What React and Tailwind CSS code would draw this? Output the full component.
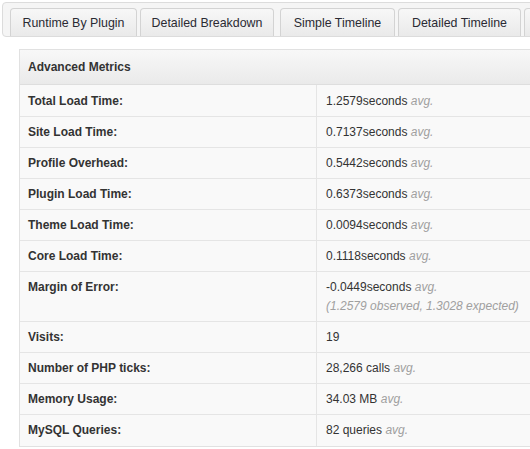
import React from 'react';

const tabs = [
  { label: 'Runtime By Plugin', w: 'w-[127px]', ml: '' },
  { label: 'Detailed Breakdown', w: 'w-[134px]', ml: 'ml-[3px]' },
  { label: 'Simple Timeline', w: 'w-[115px]', ml: 'ml-[6px]' },
  { label: 'Detailed Timeline', w: 'w-[123px]', ml: 'ml-[3px]' },
  { label: '', w: 'w-[110px]', ml: 'ml-[3px]' },
];

const rows = [
  { label: 'Total Load Time:', value: '1.2579seconds', avg: true },
  { label: 'Site Load Time:', value: '0.7137seconds', avg: true },
  { label: 'Profile Overhead:', value: '0.5442seconds', avg: true },
  { label: 'Plugin Load Time:', value: '0.6373seconds', avg: true },
  { label: 'Theme Load Time:', value: '0.0094seconds', avg: true },
  { label: 'Core Load Time:', value: '0.1118seconds', avg: true },
  { label: 'Margin of Error:', value: '-0.0449seconds', avg: true, note: '(1.2579 observed, 1.3028 expected)' },
  { label: 'Visits:', value: '19' },
  { label: 'Number of PHP ticks:', value: '28,266 calls', avg: true },
  { label: 'Memory Usage:', value: '34.03 MB', avg: true },
  { label: 'MySQL Queries:', value: '82 queries', avg: true },
];

export default function App() {
  return (
    <div className="w-[530px] h-[449px] overflow-hidden bg-white text-[#333] font-['Liberation_Sans',Arial,sans-serif]">
      {/* Tabs */}
      <div className="ml-[2px] mt-[2px] w-[560px] h-[35px] border border-[#dcdcdc] rounded-[4px] bg-[#f5f5f5] pl-[7px] pt-[5px] flex whitespace-nowrap overflow-hidden">
        {tabs.map((t, i) => (
          <div
            key={i}
            className={`${t.w} ${t.ml} shrink-0 h-[29px] flex items-center justify-center text-[12.4px] text-[#2a2a33] border border-b-0 border-[#d3d3d3] rounded-t-[4px] bg-gradient-to-b from-[#f7f7f7] to-[#e9e9e9]`}
          >
            {t.label}
          </div>
        ))}
      </div>

      {/* Metrics table */}
      <div className="ml-[19px] mt-[12px] w-[540px] border border-[#e1e1e1] text-[12px]">
        <div className="h-[35px] flex items-center px-[8px] font-bold bg-gradient-to-b from-[#f8f8f8] to-[#eaeaea] border-b border-[#dedede]">
          Advanced Metrics
        </div>
        {rows.map((r, i) => {
          const pad = i === 0 ? 'pt-[9px] pb-[8px]' : i === rows.length - 1 ? 'pt-[8px] pb-[9px]' : 'py-[8px]';
          return (
            <div key={r.label} className={`flex bg-[#f9f9f9] ${i > 0 ? 'border-t border-[#e5e5e5]' : ''}`}>
              <div className={`w-[297px] shrink-0 px-[8px] ${pad} font-bold border-r border-[#e5e5e5] leading-[14px]`}>
                {r.label}
              </div>
              <div className={`flex-1 px-[9px] ${pad} leading-[14px]`}>
                <div>
                  {r.value}
                  {r.avg && <span className="italic text-[#a0a0a0]"> avg.</span>}
                </div>
                {r.note && <div className="italic text-[#a0a0a0] mt-[5px]">{r.note}</div>}
              </div>
            </div>
          );
        })}
      </div>
    </div>
  );
}
